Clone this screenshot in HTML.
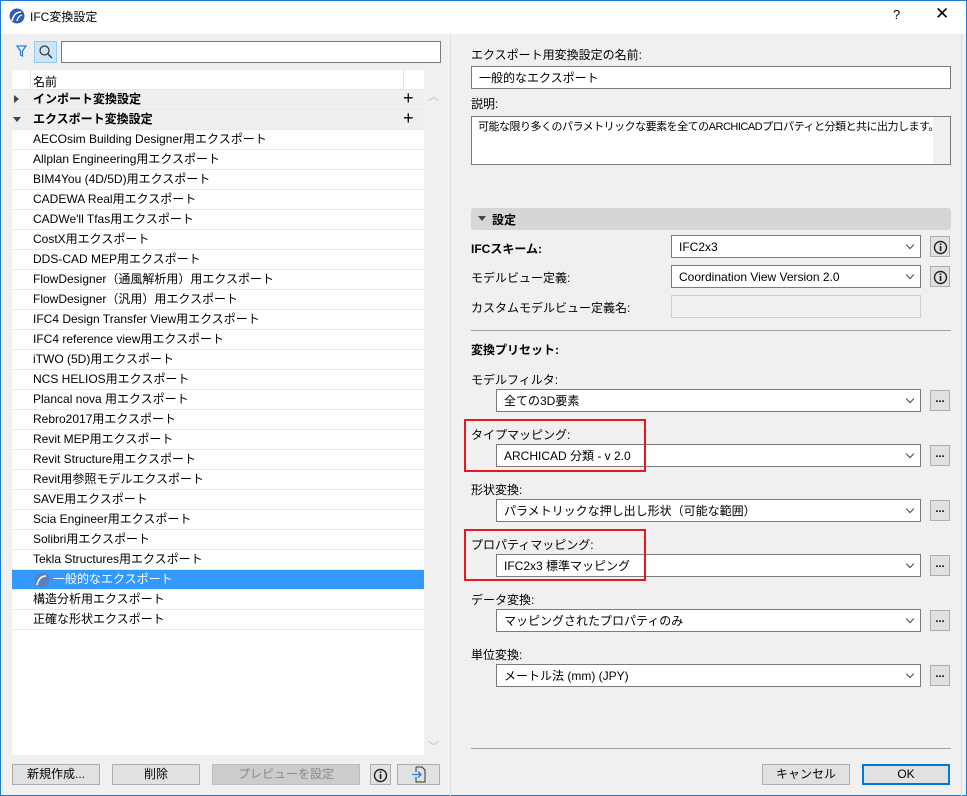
<!DOCTYPE html><html><head><meta charset="utf-8"><style>
*{box-sizing:border-box;margin:0;padding:0}
body{width:967px;height:796px;overflow:hidden;background:#f0f0f0;font-family:"Liberation Sans","Noto Sans CJK JP",sans-serif;font-size:12px;color:#000;position:relative}
.a{position:absolute}
.win{position:absolute;left:0;top:0;width:967px;height:796px;border:1px solid #1f7ad6}
.title{left:1px;top:1px;width:965px;height:33px;background:#fff}
.row{position:absolute;left:12px;width:412px;height:20px;background:#fff;border-bottom:1px solid #e8e8e8;line-height:19px;padding-left:21px;white-space:nowrap}
.btn{position:absolute;height:21px;background:#e1e1e1;border:1px solid #adadad;text-align:center;line-height:19px}
.inp{position:absolute;background:#fff;border:1px solid #7a7a7a;height:23px;line-height:22px;padding-left:7px;white-space:nowrap;overflow:hidden}
.sel{position:absolute;background:#fff;border:1px solid #7a7a7a;height:23px;line-height:22px;padding-left:7px;white-space:nowrap}
.sel:after{content:"";position:absolute;right:7px;top:6px;width:5px;height:5px;border-right:1px solid #444;border-bottom:1px solid #444;transform:rotate(45deg)}
.dots{position:absolute;width:20px;height:21px;background:#e1e1e1;border:1px solid #adadad;text-align:center;line-height:17px;font-weight:bold;font-size:11px}
.info{position:absolute;width:20px;height:21px;background:#e1e1e1;border:1px solid #adadad}
.info svg{position:absolute;left:2px;top:3px}
.lbl{position:absolute;white-space:nowrap}
.red{position:absolute;border:2px solid #e8161d}
</style></head><body>
<div class="win"></div>
<div class="a title"></div>
<svg class="a" style="left:9px;top:8px" width="16" height="16" viewBox="0 0 16 16"><circle cx="8" cy="8" r="7.5" fill="#2b5fb0"/><path d="M3 13 Q5 4 12 4" stroke="#fff" stroke-width="1.6" fill="none"/><path d="M8 13 Q9 8 13 7" stroke="#fff" stroke-width="1.4" fill="none"/></svg>
<div class="lbl" style="left:30px;top:8px;font-size:12px">IFC変換設定</div>
<div class="lbl" style="left:893px;top:7px;font-size:13px">?</div>
<div class="lbl" style="left:935px;top:4px;font-size:17px">✕</div>

<svg class="a" style="left:16px;top:45px" width="11" height="12"><path d="M1 1 H10 L6.5 6 V11 L4.5 10 V6 Z" fill="none" stroke="#2a7be0" stroke-width="1.2"/></svg>
<div class="a" style="left:34px;top:41px;width:23px;height:22px;background:#cce4f7;border:1px solid #99c9ef"></div>
<svg class="a" style="left:38px;top:44px" width="16" height="16"><circle cx="6.5" cy="6.5" r="4.5" fill="none" stroke="#333" stroke-width="1.2"/><path d="M10 10 L14 14" stroke="#333" stroke-width="1.4"/></svg>
<div class="a" style="left:61px;top:41px;width:380px;height:22px;background:#fff;border:1px solid #7a7a7a"></div>

<div class="a" style="left:12px;top:70px;width:412px;height:685px;background:#fff"></div>
<div class="a" style="left:12px;top:70px;width:412px;height:20px;background:#fff;border-bottom:1px solid #e5e5e5"></div>
<div class="a" style="left:30px;top:70px;width:1px;height:20px;background:#e5e5e5"></div>
<div class="a" style="left:403px;top:70px;width:1px;height:20px;background:#e5e5e5"></div>
<div class="lbl" style="left:33px;top:73px">名前</div>
<div class="row" style="top:90px;background:#efefef;font-weight:bold">インポート変換設定</div>
<div class="row" style="top:110px;background:#efefef;font-weight:bold">エクスポート変換設定</div>
<div class="a" style="left:14px;top:95px;width:0;height:0;border-left:5px solid #444;border-top:4px solid transparent;border-bottom:4px solid transparent"></div>
<div class="a" style="left:13px;top:117px;width:0;height:0;border-top:5px solid #444;border-left:4px solid transparent;border-right:4px solid transparent"></div>
<div class="lbl" style="left:403px;top:88px;font-size:18px">+</div>
<div class="lbl" style="left:403px;top:108px;font-size:18px">+</div>
<div class="row" style="top:130px">AECOsim Building Designer用エクスポート</div>
<div class="row" style="top:150px">Allplan Engineering用エクスポート</div>
<div class="row" style="top:170px">BIM4You (4D/5D)用エクスポート</div>
<div class="row" style="top:190px">CADEWA Real用エクスポート</div>
<div class="row" style="top:210px">CADWe'll Tfas用エクスポート</div>
<div class="row" style="top:230px">CostX用エクスポート</div>
<div class="row" style="top:250px">DDS-CAD MEP用エクスポート</div>
<div class="row" style="top:270px">FlowDesigner（通風解析用）用エクスポート</div>
<div class="row" style="top:290px">FlowDesigner（汎用）用エクスポート</div>
<div class="row" style="top:310px">IFC4 Design Transfer View用エクスポート</div>
<div class="row" style="top:330px">IFC4 reference view用エクスポート</div>
<div class="row" style="top:350px">iTWO (5D)用エクスポート</div>
<div class="row" style="top:370px">NCS HELIOS用エクスポート</div>
<div class="row" style="top:390px">Plancal nova 用エクスポート</div>
<div class="row" style="top:410px">Rebro2017用エクスポート</div>
<div class="row" style="top:430px">Revit MEP用エクスポート</div>
<div class="row" style="top:450px">Revit Structure用エクスポート</div>
<div class="row" style="top:470px">Revit用参照モデルエクスポート</div>
<div class="row" style="top:490px">SAVE用エクスポート</div>
<div class="row" style="top:510px">Scia Engineer用エクスポート</div>
<div class="row" style="top:530px">Solibri用エクスポート</div>
<div class="row" style="top:550px">Tekla Structures用エクスポート</div>
<div class="row" style="top:570px;background:#3399ff;color:#fff;padding-left:41px">一般的なエクスポート</div>
<svg class="a" style="left:34px;top:572px" width="16" height="16"><circle cx="8" cy="8" r="7.5" fill="#5a7fc0"/><path d="M3 13 Q5 4 12 4" stroke="#fff" stroke-width="1.6" fill="none"/></svg>
<div class="row" style="top:590px">構造分析用エクスポート</div>
<div class="row" style="top:610px">正確な形状エクスポート</div>
<div class="lbl" style="left:428px;top:88px;color:#bbb;font-size:11px">︿</div>
<div class="lbl" style="left:428px;top:738px;color:#bbb;font-size:11px">﹀</div>

<div class="btn" style="left:12px;top:764px;width:88px">新規作成...</div>
<div class="btn" style="left:112px;top:764px;width:88px">削除</div>
<div class="btn" style="left:212px;top:764px;width:148px;background:#ccc;border-color:#bfbfbf;color:#8a8a8a">プレビューを設定</div>
<div class="info" style="left:370px;top:764px;width:21px"><svg width="15" height="15"><circle cx="7.5" cy="7.5" r="6" fill="none" stroke="#222" stroke-width="1.4"/><rect x="6.7" y="6" width="1.7" height="5" fill="#222"/><rect x="6.7" y="3.5" width="1.7" height="1.6" fill="#222"/></svg></div>
<div class="btn" style="left:397px;top:764px;width:43px"></div>
<svg class="a" style="left:410px;top:766px" width="18" height="17"><path d="M6 1 H12 L15 4 V16 H6 V11 M6 6 V1" fill="none" stroke="#333"/><path d="M2 8.5 H11 M8 5.5 L11 8.5 L8 11.5" fill="none" stroke="#2a7be0" stroke-width="1.3"/></svg>

<div class="a" style="left:450px;top:34px;width:1px;height:762px;background:#dcdcdc"></div>
<div class="a" style="left:961px;top:34px;width:1px;height:762px;background:#dcdcdc"></div>

<div class="lbl" style="left:471px;top:46px">エクスポート用変換設定の名前:</div>
<div class="inp" style="left:471px;top:66px;width:480px">一般的なエクスポート</div>
<div class="lbl" style="left:471px;top:95px">説明:</div>
<div class="inp" style="left:471px;top:116px;width:480px;height:49px;line-height:20px;font-size:11px;letter-spacing:-0.5px;padding-left:6px">可能な限り多くのパラメトリックな要素を全てのARCHICADプロパティと分類と共に出力します。</div>
<div class="a" style="left:933px;top:117px;width:17px;height:47px;background:#f0f0f0"></div>

<div class="a" style="left:471px;top:208px;width:480px;height:22px;background:#d6d6d6;border-radius:3px"></div>
<div class="a" style="left:478px;top:216px;width:0;height:0;border-top:5px solid #444;border-left:4px solid transparent;border-right:4px solid transparent"></div>
<div class="lbl" style="left:492px;top:211px;font-weight:bold">設定</div>
<div class="lbl" style="left:471px;top:240px;font-weight:bold">IFCスキーム:</div>
<div class="sel" style="left:671px;top:235px;width:250px">IFC2x3</div>
<div class="info" style="left:930px;top:236px"><svg width="15" height="15"><circle cx="7.5" cy="7.5" r="6" fill="none" stroke="#222" stroke-width="1.4"/><rect x="6.7" y="6" width="1.7" height="5" fill="#222"/><rect x="6.7" y="3.5" width="1.7" height="1.6" fill="#222"/></svg></div>
<div class="lbl" style="left:471px;top:269px">モデルビュー定義:</div>
<div class="sel" style="left:671px;top:265px;width:250px">Coordination View Version 2.0</div>
<div class="info" style="left:930px;top:266px"><svg width="15" height="15"><circle cx="7.5" cy="7.5" r="6" fill="none" stroke="#222" stroke-width="1.4"/><rect x="6.7" y="6" width="1.7" height="5" fill="#222"/><rect x="6.7" y="3.5" width="1.7" height="1.6" fill="#222"/></svg></div>
<div class="lbl" style="left:471px;top:299px">カスタムモデルビュー定義名:</div>
<div class="a" style="left:671px;top:295px;width:250px;height:23px;background:#f0f0f0;border:1px solid #cfcfcf"></div>
<div class="a" style="left:471px;top:330px;width:480px;height:1px;background:#a0a0a0"></div>
<div class="lbl" style="left:471px;top:341px;font-weight:bold">変換プリセット:</div>

<div class="lbl" style="left:471px;top:371px">モデルフィルタ:</div>
<div class="sel" style="left:496px;top:389px;width:425px">全ての3D要素</div><div class="dots" style="left:930px;top:390px">...</div>
<div class="lbl" style="left:471px;top:426px">タイプマッピング:</div>
<div class="sel" style="left:496px;top:444px;width:425px">ARCHICAD 分類 - v 2.0</div><div class="dots" style="left:930px;top:445px">...</div>
<div class="lbl" style="left:471px;top:481px">形状変換:</div>
<div class="sel" style="left:496px;top:499px;width:425px">パラメトリックな押し出し形状（可能な範囲）</div><div class="dots" style="left:930px;top:500px">...</div>
<div class="lbl" style="left:471px;top:536px">プロパティマッピング:</div>
<div class="sel" style="left:496px;top:554px;width:425px">IFC2x3 標準マッピング</div><div class="dots" style="left:930px;top:555px">...</div>
<div class="lbl" style="left:471px;top:591px">データ変換:</div>
<div class="sel" style="left:496px;top:609px;width:425px">マッピングされたプロパティのみ</div><div class="dots" style="left:930px;top:610px">...</div>
<div class="lbl" style="left:471px;top:646px">単位変換:</div>
<div class="sel" style="left:496px;top:664px;width:425px">メートル法 (mm) (JPY)</div><div class="dots" style="left:930px;top:665px">...</div>
<div class="red" style="left:464px;top:419px;width:182px;height:53px"></div>
<div class="red" style="left:464px;top:529px;width:182px;height:52px"></div>

<div class="a" style="left:471px;top:748px;width:480px;height:1px;background:#a0a0a0"></div>
<div class="btn" style="left:762px;top:764px;width:88px">キャンセル</div>
<div class="btn" style="left:862px;top:764px;width:88px;border:1px solid #0078d7;box-shadow:inset 0 0 0 1px #0078d7">OK</div>
</body></html>
